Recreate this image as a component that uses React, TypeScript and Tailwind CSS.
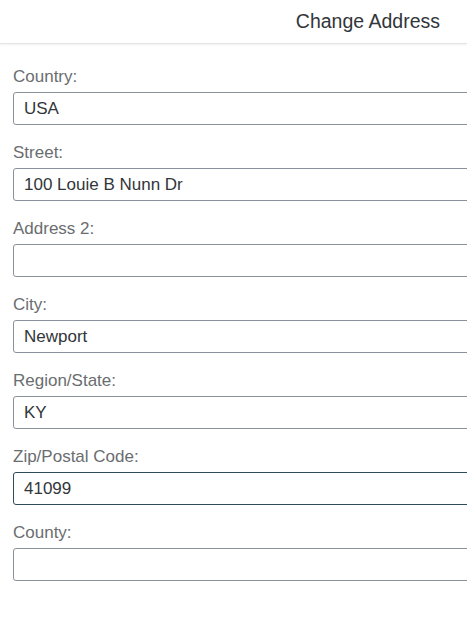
const fields = [
  { label: "Country:", value: "USA" },
  { label: "Street:", value: "100 Louie B Nunn Dr" },
  { label: "Address 2:", value: "" },
  { label: "City:", value: "Newport" },
  { label: "Region/State:", value: "KY" },
  { label: "Zip/Postal Code:", value: "41099", active: true },
  { label: "County:", value: "" },
];

export default function App() {
  return (
    <div className="w-[467px] h-[618px] overflow-hidden bg-white font-['Liberation_Sans',sans-serif]">
      <div className="h-[44px] flex items-center justify-end pr-[27px] border-b border-[#e4e4e4] shadow-[0_1px_2px_rgba(0,0,0,0.06)]">
        <h1 className="text-[19.5px] text-[#32363a]">Change Address</h1>
      </div>
      <div className="pl-[13px] pt-[22px]">
        {fields.map(f => (
          <div key={f.label} className="mb-[17px]">
            <label className="block h-[26px] text-[17px] leading-[22px] text-[#6a6d70]">{f.label}</label>
            <div
              className={`w-[480px] h-[33px] rounded-[3px] border flex items-center pl-[10px] text-[17px] text-[#32363a] ${
                f.active ? "border-[#2e4a5b]" : "border-[#89919a]"
              }`}
            >
              {f.value}
            </div>
          </div>
        ))}
      </div>
    </div>
  );
}
